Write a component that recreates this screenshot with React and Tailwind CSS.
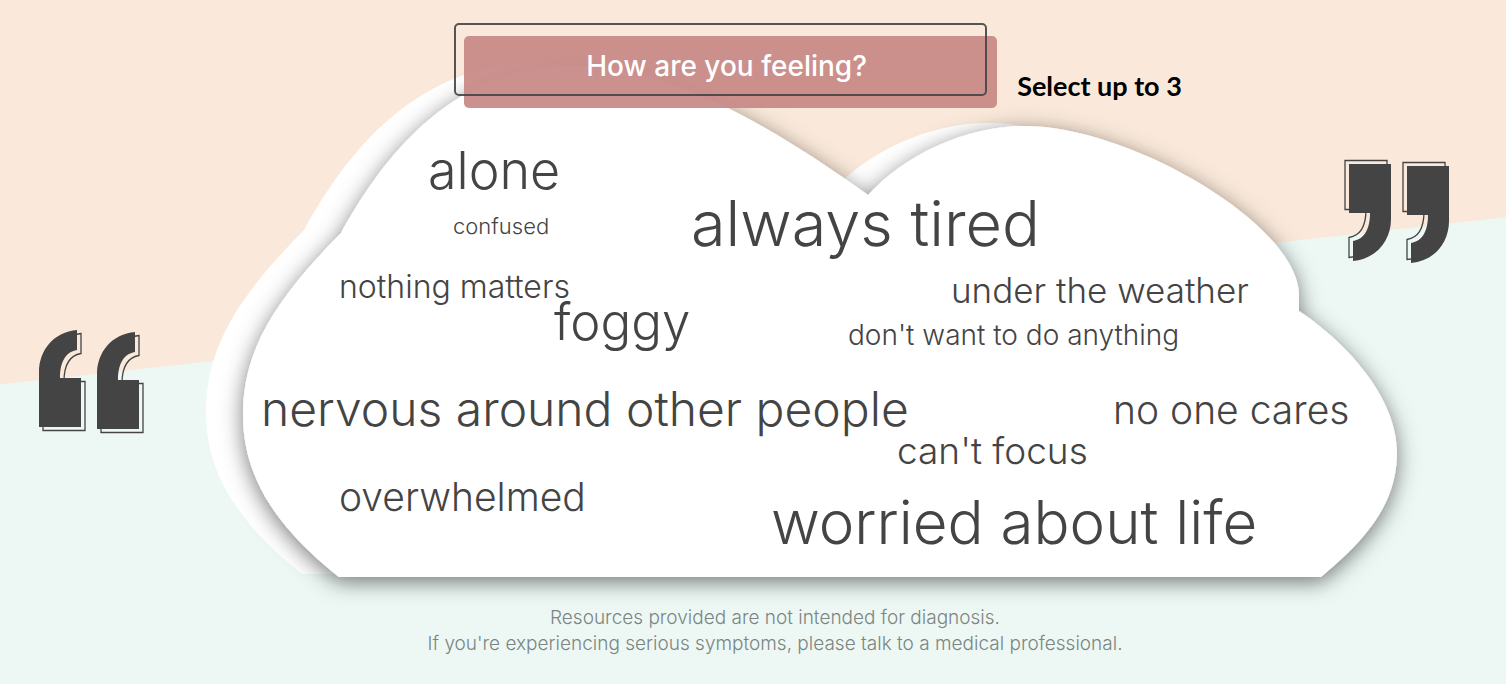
import { useState } from "react";

const CANVAS_WIDTH = 1191;
const MAX_PICKS = 3;

const FEELINGS = [
  { text: "alone", x: 222, place: "top-[85px] text-[52px]" },
  { text: "confused", x: 247, place: "top-[155px] text-[22px]" },
  { text: "always tired", x: 485, place: "top-[132px] text-[63px]" },
  { text: "nothing matters", x: 133, place: "top-[211px] text-[32px]" },
  { text: "foggy", x: 348, place: "top-[236px] text-[51px]" },
  { text: "under the weather", x: 745, place: "top-[213px] text-[35px]" },
  { text: "don't want to do anything", x: 642, place: "top-[261px] text-[28px]" },
  { text: "nervous around other people", x: 55, place: "top-[325px] text-[48px]" },
  { text: "no one cares", x: 907, place: "top-[330px] text-[39px]" },
  { text: "can't focus", x: 691, place: "top-[372px] text-[37px]" },
  { text: "overwhelmed", x: 133, place: "top-[417px] text-[39px]" },
  { text: "worried about life", x: 565, place: "top-[432px] text-[60px]" },
];

const CLOUD =
  "M339 577 C280 530 243 480 243 415 C243 350 275 300 341 233 C372 178 440 66 573 66 C665 66 760 118 868 195 C905 155 965 126 1025 126 C1130 126 1299 225 1299 295 V311 C1350 345 1397 400 1397 452 C1397 505 1365 540 1321 577 Z";

const MARK = "M0 97 V42 C0 20 15 2 38 0 V20 C26 22 21 33 21 48 H42 V97 Z";

function QuoteMark({ className }) {
  return (
    <svg aria-hidden="true" viewBox="0 0 107 105" className={`h-[105px] w-[107px] shrink-0 ${className}`}>
      {["translate(1 1)", "translate(59 3)"].map((t) => (
        <g key={t} transform={t}>
          <path d={MARK} transform="translate(4 3.5)" fill="none" stroke="#444" strokeWidth="1.3" />
          <path d={MARK} fill="#444" />
        </g>
      ))}
    </svg>
  );
}

function Cloud() {
  return (
    <svg
      aria-hidden="true"
      viewBox="206 60 1191 518"
      preserveAspectRatio="none"
      className="block h-full w-full overflow-visible"
    >
      <defs>
        <filter id="lift" x="-10%" y="-10%" width="120%" height="125%">
          <feDropShadow dx="0" dy="5" stdDeviation="11" floodColor="#000" floodOpacity="0.52" />
        </filter>
      </defs>
      <path d={CLOUD} transform="translate(-37 -3)" fill="#fff" />
      <path d={CLOUD} fill="#fff" filter="url(#lift)" />
    </svg>
  );
}

export default function App() {
  const [picked, setPicked] = useState([]);

  const toggle = (text) =>
    setPicked((now) => {
      if (now.includes(text)) return now.filter((t) => t !== text);
      return now.length < MAX_PICKS ? [...now, text] : now;
    });

  return (
    <main className="relative isolate min-h-screen overflow-hidden bg-[#edf8f5] font-['Inter',sans-serif] text-[#444]">
      <svg
        aria-hidden="true"
        viewBox="0 0 1506 684"
        preserveAspectRatio="none"
        className="absolute inset-0 -z-10 h-full w-full"
      >
        <path d="M0 0 H1506 V217 L0 384 Z" fill="#fae9da" />
      </svg>

      <header className="relative z-10 flex items-center justify-center gap-5 pt-[23px] pl-[130px]">
        <div className="relative h-[85px] w-[543px]">
          <div className="absolute right-0 bottom-0 h-[72px] w-[533px] rounded-[5px] bg-[#c88b88]/95" />
          <h1 className="absolute top-0 left-0 flex h-[73px] w-[533px] items-center justify-center rounded-[5px] border-2 border-[#444]/90 pt-3 pl-3 text-[28px] font-medium text-white">
            How are you feeling?
          </h1>
        </div>
        <p className="pt-10 font-['Lato',sans-serif] text-[27px] leading-8 font-bold whitespace-nowrap text-black">
          Select up to 3
        </p>
      </header>

      <div className="-mt-12 flex items-start">
        <QuoteMark className="mt-[269px] mr-[61px] ml-[38px]" />
        <section aria-label="Feelings" className="relative h-[518px] flex-1">
          <Cloud />
          {FEELINGS.map(({ text, x, place }) => (
            <button
              key={text}
              type="button"
              aria-pressed={picked.includes(text)}
              onClick={() => toggle(text)}
              style={{ left: `${(x / CANVAS_WIDTH) * 100}%` }}
              className={`absolute cursor-pointer leading-none font-light whitespace-nowrap aria-pressed:text-[#c88b88] ${place}`}
            >
              {text}
            </button>
          ))}
        </section>
        <QuoteMark className="relative mt-[99px] mr-14 -ml-[54px] rotate-180" />
      </div>

      <footer className="mt-[27px] pb-7 pl-11 text-center text-[19px] leading-[26px] font-light text-[#7b8582]">
        <p>Resources provided are not intended for diagnosis.</p>
        <p>If you're experiencing serious symptoms, please talk to a medical professional.</p>
      </footer>
    </main>
  );
}
